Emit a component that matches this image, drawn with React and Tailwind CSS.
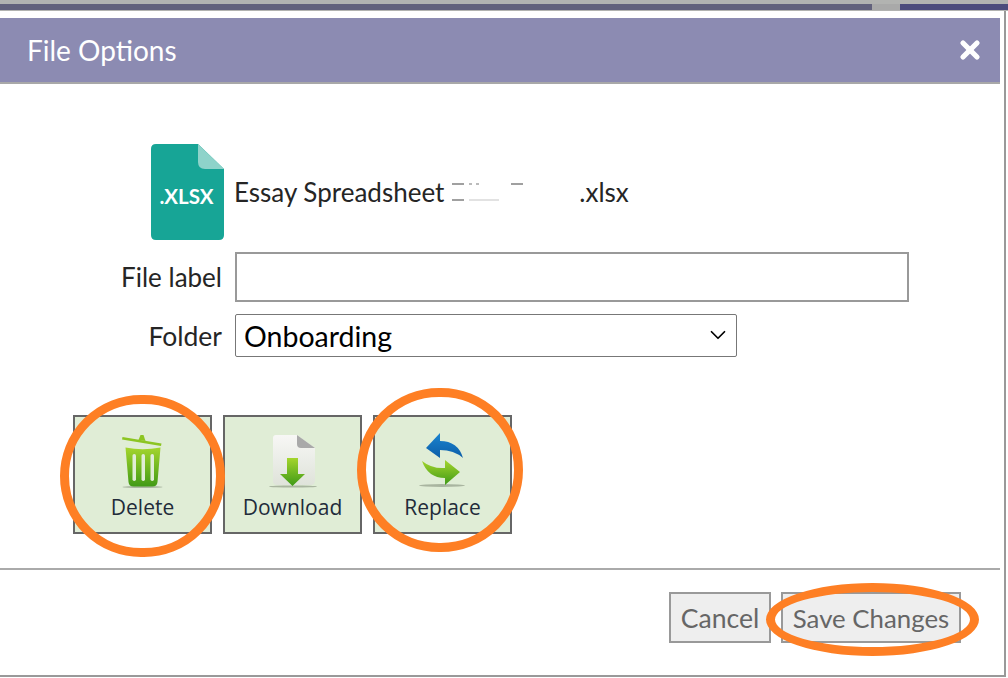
import React from 'react';
import { X, ChevronDown } from 'lucide-react';

function TrashIcon() {
  return (
    <svg width="50" height="56" viewBox="1.5 0 50 56" className="blur-[0.6px]">
      <defs>
        <linearGradient id="trashGreen" x1="0" y1="0" x2="0" y2="1">
          <stop offset="0" stopColor="#a4d52c" />
          <stop offset="1" stopColor="#419a16" />
        </linearGradient>
      </defs>
      <ellipse cx="26" cy="55" rx="20" ry="1" fill="#a9b5a0" />
      <path d="M6 5 L45 11.5 L44.5 14 L5.5 7.5 Z" fill="#8cc522" />
      <path d="M22 8 L24 3 L27 3 L29 9 Z" fill="#8cc522" />
      <path d="M9 15.5 Q26 19 44 15.5 L41 50 Q40.5 54.5 36 54.5 L17 54.5 Q12.5 54.5 12 50 Z" fill="url(#trashGreen)" />
      <rect x="16" y="22" width="3.5" height="27" rx="1.7" fill="#e0edd6" />
      <rect x="25" y="22" width="3.5" height="27" rx="1.7" fill="#e0edd6" />
      <rect x="34" y="22" width="3.5" height="27" rx="1.7" fill="#e0edd6" />
    </svg>
  );
}

function DownloadIcon() {
  return (
    <svg width="50" height="56" viewBox="1 0 50 56" className="blur-[0.6px]">
      <defs>
        <linearGradient id="pageGrey" x1="0" y1="0" x2="0" y2="1">
          <stop offset="0" stopColor="#f7f7f5" />
          <stop offset="1" stopColor="#dfe3da" />
        </linearGradient>
        <linearGradient id="arrowGreen" x1="0" y1="0" x2="0" y2="1">
          <stop offset="0" stopColor="#a4d52c" />
          <stop offset="1" stopColor="#3f9a18" />
        </linearGradient>
      </defs>
      <ellipse cx="26" cy="54.5" rx="24" ry="1" fill="#a9b5a0" />
      <path d="M6 6 Q6 3 9 3 L30 3 L48 16 L48 48 Q48 53 44 53 L10 53 Q6 53 6 49 Z" fill="url(#pageGrey)" />
      <path d="M30 3 L48 16 L34 16 Q30 16 30 12 Z" fill="#a9a9a9" />
      <path d="M20 26 L31 26 L31 42 L38 42 L25.5 54 L13 42 L20 42 Z" fill="url(#arrowGreen)" />
    </svg>
  );
}

function ReplaceIcon() {
  return (
    <svg width="50" height="56" viewBox="0 0 50 56" className="blur-[0.6px]">
      <defs>
        <linearGradient id="blueArrow" x1="0" y1="0" x2="0" y2="1">
          <stop offset="0" stopColor="#1a84d0" />
          <stop offset="1" stopColor="#0d5ea8" />
        </linearGradient>
        <linearGradient id="arrowGreen2" x1="0" y1="0" x2="0" y2="1">
          <stop offset="0" stopColor="#a4d52c" />
          <stop offset="1" stopColor="#3f9a18" />
        </linearGradient>
      </defs>
      <ellipse cx="24" cy="53.5" rx="23" ry="1.4" fill="#a9b5a0" />
      <path d="M8 16 L22 1 L22 9 Q40 9 45 26 Q36 18 22 18 L22 26 Z" fill="url(#blueArrow)" />
      <path d="M4 29 Q14 37 27 36 L27 28 L42 40 L27 53 L27 46 Q10 46 4 29 Z" fill="url(#arrowGreen2)" />
    </svg>
  );
}

function XlsxIcon() {
  return (
    <div className="relative w-[73px] h-[96px] shrink-0">
      <svg width="73" height="96" viewBox="0 0 73 96" className="absolute inset-0">
        <path d="M5 0 L47 0 L73 25 L73 91 Q73 96 68 96 L5 96 Q0 96 0 91 L0 5 Q0 0 5 0 Z" fill="#17a596" />
        <path d="M47 0 L73 25 L54 25 Q47 25 47 18 Z" fill="#8ed3ca" />
      </svg>
      <span className="absolute left-0 right-[2px] top-[40px] text-center text-white text-[20.5px] font-bold leading-6 font-['Lato',sans-serif]">.XLSX</span>
    </div>
  );
}

function ActionButton({ icon, label }) {
  return (
    <button className="w-[139px] h-[119px] border-2 border-[#666] bg-[#e0edd6] flex flex-col items-center pt-[15px] text-[#222b3a] text-[21px] leading-7 font-['Open_Sans',sans-serif]">
      {icon}
      <span className="mt-[5px]">{label}</span>
    </button>
  );
}

export default function App() {
  return (
    <div className="relative w-[1008px] h-[678px] overflow-hidden bg-white font-['Lato',sans-serif]">
      {/* strip of the page behind the dialog */}
      <div className="h-[11px] bg-[#b2b3b1] pt-[4px]">
        <div className="flex h-[6px]">
          <div className="w-[872px] bg-[#62617c]" />
          <div className="w-[28px] bg-[#a9a9a9]" />
          <div className="flex-1 bg-[#4c4b7c]" />
        </div>
      </div>

      <div className="w-[1006px] h-[666px] border-r-2 border-b-2 border-[#999] pt-[7px] pr-[4px]">
        <div className="flex items-center justify-between h-[66px] bg-[#8c8bb2] border-b-2 border-[#a8a8a8] pl-[27px] pr-[16px] text-white">
          <h1 className="text-[28px] font-normal leading-none">File Options</h1>
          <X size={28} strokeWidth={4.5} className="blur-[0.5px]" />
        </div>

        <div className="h-[484px] flex flex-col pt-[60px]">
          <div className="flex items-center pl-[151px] gap-[10px]">
            <XlsxIcon />
            <div className="flex items-center text-[26px] text-[#252525] leading-8">
              <span>Essay Spreadsheet</span>
              {/* name scrubbed out in the original, only scraps remain */}
              <span className="w-[135px] h-[20px] flex flex-col justify-between pl-[8px] py-[1px]">
                <span className="flex">
                  <span className="w-[12px] h-[2px] bg-[#a0a0a0]" />
                  <span className="w-[3px] h-[2px] bg-[#bbbbbb] ml-[5px]" />
                  <span className="w-[3px] h-[2px] bg-[#bbbbbb] ml-[4px]" />
                  <span className="w-[12px] h-[2px] bg-[#a0a0a0] ml-[32px]" />
                </span>
                <span className="flex">
                  <span className="w-[12px] h-[2px] bg-[#a0a0a0]" />
                  <span className="w-[30px] h-[2px] bg-[#e2e2e2] ml-[5px]" />
                </span>
              </span>
              <span>.xlsx</span>
            </div>
          </div>

          <div className="flex items-center mt-[12px]">
            <label className="w-[222px] text-right text-[26px] text-[#252525] leading-8">File label</label>
            <input className="ml-[13px] w-[674px] h-[50px] border-2 border-[#999] bg-white outline-none" />
          </div>

          <div className="flex items-center mt-[12px]">
            <label className="w-[222px] text-right text-[26.5px] text-[#252525] leading-8">Folder</label>
            <div className="relative ml-[13px] w-[502px] h-[43px]">
              <select className="appearance-none w-full h-full border border-[#777] rounded-[2px] bg-white pl-[8px] pb-[2px] text-[28.5px] text-black">
                <option>Onboarding</option>
              </select>
              <ChevronDown size={26} strokeWidth={1.6} className="absolute right-[6px] top-[8px] text-black pointer-events-none" />
            </div>
          </div>

          <div className="flex gap-[11px] pl-[73px] mt-[58px]">
            <ActionButton icon={<TrashIcon />} label="Delete" />
            <ActionButton icon={<DownloadIcon />} label="Download" />
            <ActionButton icon={<ReplaceIcon />} label="Replace" />
          </div>
        </div>

        <div className="h-[2px] bg-[#aaa]" />

        <div className="flex justify-end gap-[10px] pt-[22px] pr-[39px]">
          <button className="w-[102px] h-[51px] border-2 border-[#999] bg-[#eeeeee] pt-[2px] text-[26.6px] text-[#666]">Cancel</button>
          <button className="w-[180px] h-[51px] border-2 border-[#999] bg-[#eeeeee] pt-[2px] text-[25.8px] text-[#666]">Save Changes</button>
        </div>
      </div>

      {/* orange annotations drawn over the screenshot */}
      <div className="absolute left-[60px] top-[395px] w-[165px] h-[162px] rounded-full border-[9px] border-[#fe7f24]" />
      <div className="absolute left-[357px] top-[388px] w-[166px] h-[164px] rounded-full border-[9px] border-[#fe7f24]" />
      <div className="absolute left-[766px] top-[583px] w-[213px] h-[73px] rounded-[50%] border-[9px] border-[#fe7f24]" />
    </div>
  );
}
